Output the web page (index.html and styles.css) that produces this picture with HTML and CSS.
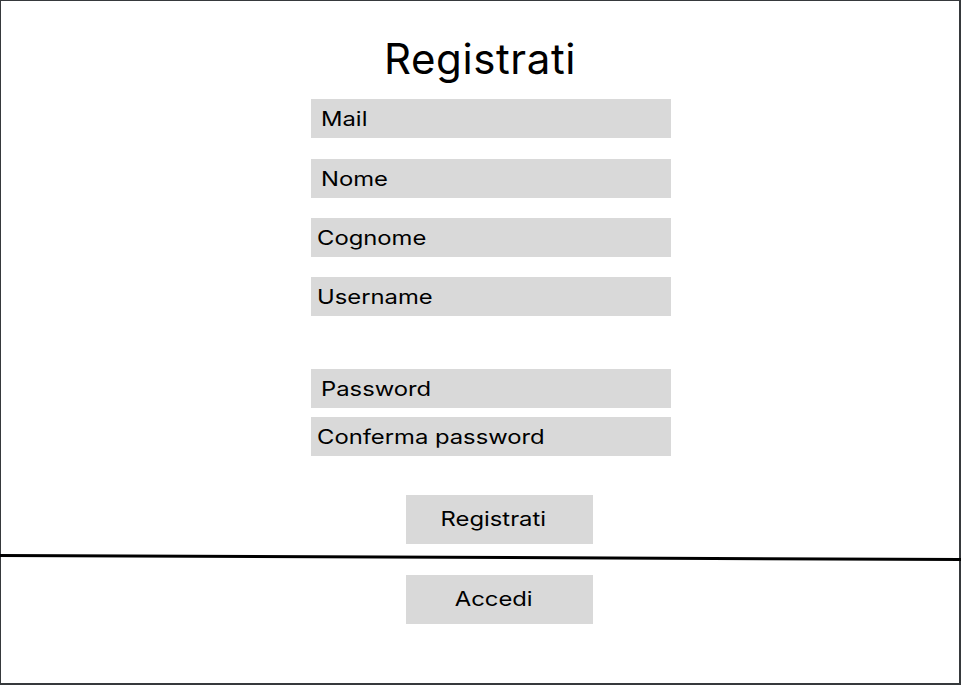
FILE: index.html
```html
<!DOCTYPE html>
<html lang="it">
  <head>
    <meta charset="UTF-8" />
    <meta name="viewport" content="width=device-width, initial-scale=1.0" />
    <title>Registrati</title>
    <link rel="stylesheet" href="styles.css">
  </head>

  <body>
    <div class="page">
      <h1 class="title">Registrati</h1>

      <div class="field mail"><span class="label">Mail</span></div>
      <div class="field nome"><span class="label">Nome</span></div>
      <div class="field tight"><span class="label">Cognome</span></div>
      <div class="field tight"><span class="label">Username</span></div>

      <div class="field password"><span class="label">Password</span></div>
      <div class="field tight confirm"><span class="label">Conferma password</span></div>

      <div class="btn btn-register"><span class="label">Registrati</span></div>

      <!-- linea di separazione leggermente inclinata -->
      <div class="divider">
        <svg viewBox="0 0 961 12" preserveAspectRatio="none">
          <line x1="0" y1="3.5" x2="961" y2="7.5" stroke="#000" stroke-width="3" />
        </svg>
      </div>

      <div class="btn"><span class="label">Accedi</span></div>
    </div>
  </body>
</html>
```

FILE: styles.css
```css
body {
  margin: 0;
  padding: 0;
  background: #fff;
  font-family: Inter, "Noto Sans", sans-serif;
  color: #000;
}

.page {
  width: 961px;
  height: 685px;
  box-sizing: border-box;
  border: 1px solid #36393c;
  border-right-width: 2px;
  border-bottom-width: 2px;
  display: flex;
  flex-direction: column;
  align-items: center;
}

.title {
  margin: 33px 0 15px 0;
  font-size: 42px;
  line-height: 50px;
  font-weight: 400;
  letter-spacing: 0.6px;
}

/* the labels of the mockup are a bit wider than plain Inter */
.label {
  display: inline-block;
  transform: scaleX(1.19);
  transform-origin: left center;
}

.field {
  width: 360px;
  height: 39px;
  box-sizing: border-box;
  padding: 0 0 0 6px;
  margin-left: 22px;
  background: #d9d9d9;
  font-size: 20px;
  display: flex;
  align-items: center;
}

.mail,
.nome,
.password {
  padding-left: 10px;
}

.nome {
  margin-top: 21px;
}

.tight {
  margin-top: 20px;
}

.password {
  margin-top: 53px;
}

.confirm {
  margin-top: 9px;
}

.btn {
  width: 187px;
  height: 49px;
  box-sizing: border-box;
  padding: 0 11px 2px 0;
  margin-left: 38px;
  background: #d9d9d9;
  font-size: 20px;
  display: flex;
  align-items: center;
  justify-content: center;
}

.btn .label {
  transform-origin: center;
}

.btn-register {
  margin-top: 39px;
}

.divider {
  align-self: stretch;
  height: 12px;
  margin: 8px -2px 11px -1px;
}

.divider svg {
  display: block;
  width: 100%;
  height: 100%;
}
```
